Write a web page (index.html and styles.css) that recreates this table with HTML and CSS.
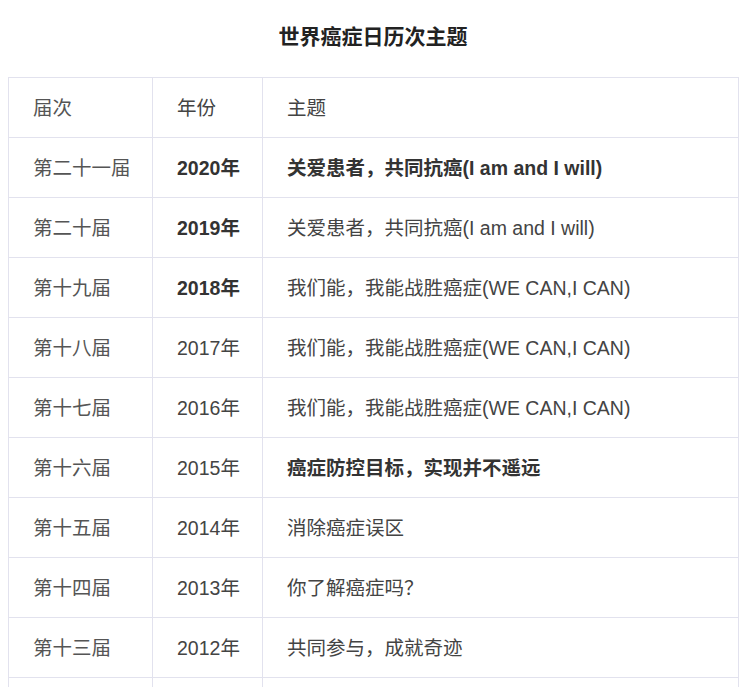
FILE: index.html
```html
<!DOCTYPE html>
<html lang="zh">
<head>
<meta charset="utf-8">
<link rel="stylesheet" href="styles.css">
</head>
<body>
<div class="page">
<div class="title">世界癌症日历次主题</div>
<table class="themes">
  <colgroup><col class="c1"><col class="c2"><col class="c3"></colgroup>
  <tr><td>届次</td><td>年份</td><td>主题</td></tr>
  <tr><td>第二十一届</td><td class="b">2020年</td><td class="b">关爱患者，共同抗癌(I am and I will)</td></tr>
  <tr><td>第二十届</td><td class="b">2019年</td><td>关爱患者，共同抗癌(I am and I will)</td></tr>
  <tr><td>第十九届</td><td class="b">2018年</td><td>我们能，我能战胜癌症(WE CAN,I CAN)</td></tr>
  <tr><td>第十八届</td><td>2017年</td><td>我们能，我能战胜癌症(WE CAN,I CAN)</td></tr>
  <tr><td>第十七届</td><td>2016年</td><td>我们能，我能战胜癌症(WE CAN,I CAN)</td></tr>
  <tr><td>第十六届</td><td>2015年</td><td class="b">癌症防控目标，实现并不遥远</td></tr>
  <tr><td>第十五届</td><td>2014年</td><td>消除癌症误区</td></tr>
  <tr><td>第十四届</td><td>2013年</td><td>你了解癌症吗？</td></tr>
  <tr><td>第十三届</td><td>2012年</td><td>共同参与，成就奇迹</td></tr>
  <tr><td>第十二届</td><td>2011年</td><td>癌症可以预防</td></tr>
</table>
</div>
</body>
</html>
```
FILE: styles.css
```css
html, body {
  margin: 0;
  padding: 0;
  background: #fff;
}
body {
  padding: 0 8px;
  font-family: "Liberation Sans", "Noto Sans CJK SC", sans-serif;
  color: #333;
}
.page {
  width: 730px;
}
.title {
  padding: 22px 0 25px;
  line-height: 30px;
  font-size: 21px;
  font-weight: bold;
  text-align: center;
  color: #222;
}
.themes {
  border-collapse: collapse;
  table-layout: fixed;
  width: 730px;
  font-size: 19.5px;
}
.c1 { width: 144px; }
.c2 { width: 110px; }
.c3 { width: 476px; }
.themes td {
  border: 1px solid #e2e2ee;
  height: 59px;
  padding: 0 0 0 24px;
  line-height: 24px;
  vertical-align: middle;
  white-space: nowrap;
  color: #444;
}
.themes td:first-child {
  color: #555;
}
.themes td.b {
  font-weight: bold;
  color: #333;
}
```
